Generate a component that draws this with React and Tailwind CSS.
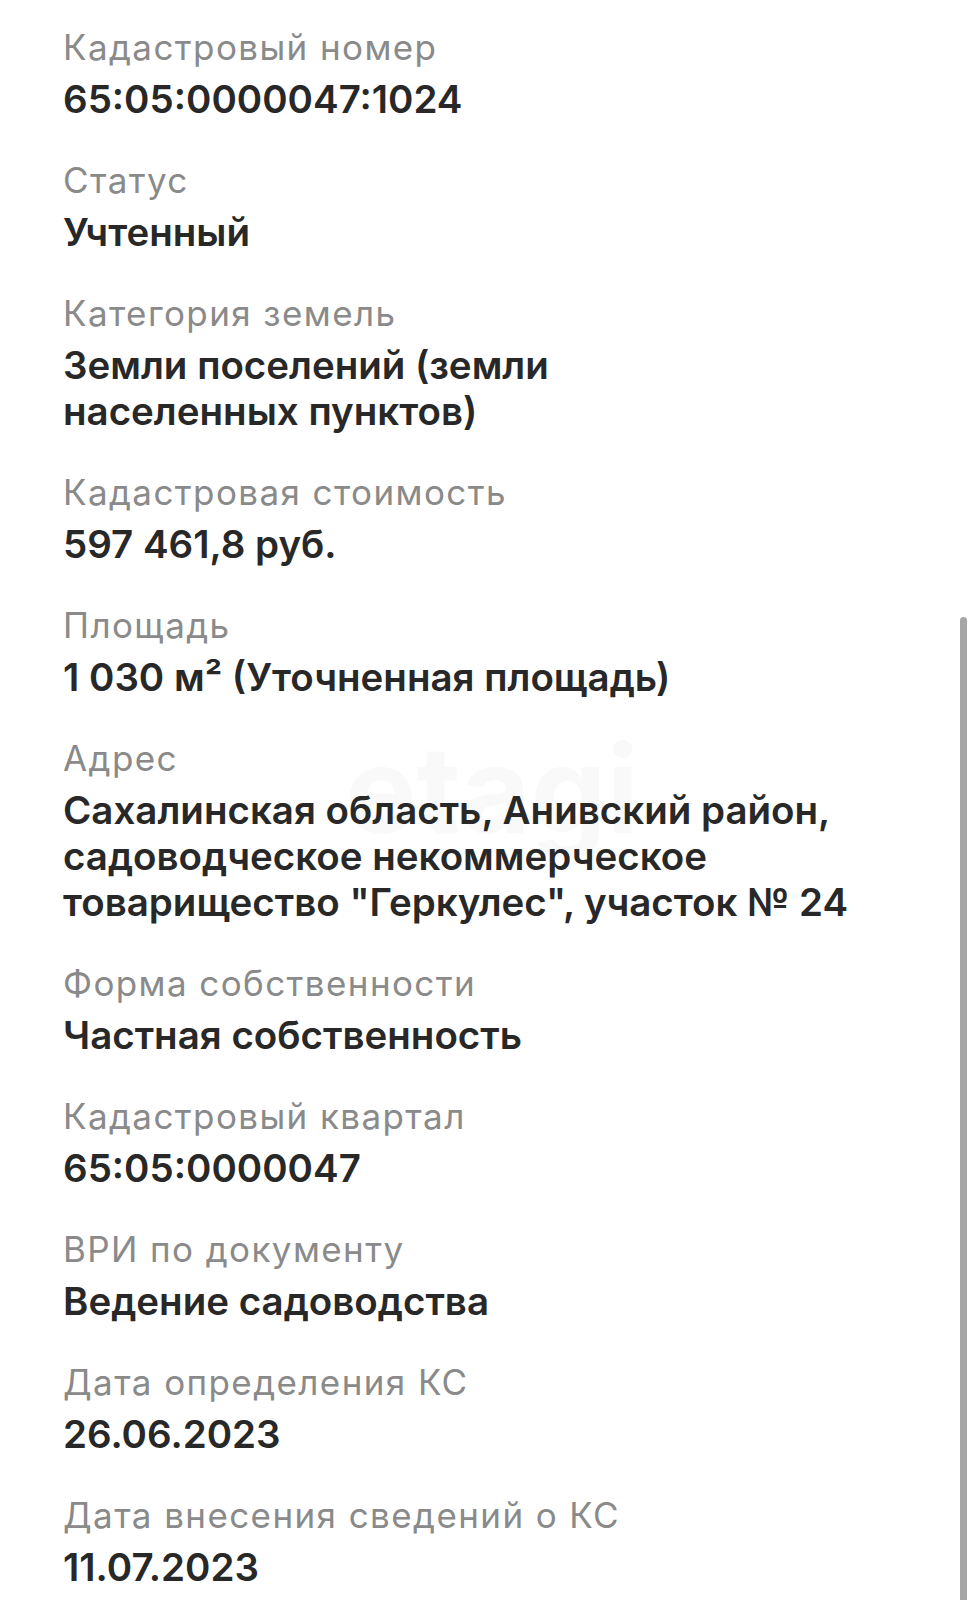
const rows = [
  { label: 'Кадастровый номер', value: ['65:05:0000047:1024'] },
  { label: 'Статус', value: ['Учтенный'] },
  { label: 'Категория земель', value: ['Земли поселений (земли', 'населенных пунктов)'] },
  { label: 'Кадастровая стоимость', value: ['597 461,8 руб.'] },
  { label: 'Площадь', value: ['1 030 м² (Уточненная площадь)'] },
  { label: 'Адрес', value: ['Сахалинская область, Анивский район,', 'садоводческое некоммерческое', 'товарищество "Геркулес", участок № 24'] },
  { label: 'Форма собственности', value: ['Частная собственность'] },
  { label: 'Кадастровый квартал', value: ['65:05:0000047'] },
  { label: 'ВРИ по документу', value: ['Ведение садоводства'] },
  { label: 'Дата определения КС', value: ['26.06.2023'] },
  { label: 'Дата внесения сведений о КС', value: ['11.07.2023'] },
];

export default function App() {
  return (
    <div className="relative h-[1600px] w-full overflow-hidden bg-white font-['Inter','Noto_Sans',sans-serif]">
      {/* faint watermark behind the address */}
      <div className="pointer-events-none absolute left-[345px] top-[700px] select-none text-[120px] font-bold text-[#f9f9f9]">
        etagi
      </div>

      <div className="relative flex flex-col gap-[34px] pl-[63px] pt-[23px]">
        {rows.map((r) => (
          <div key={r.label} className="flex flex-col">
            <div className="whitespace-nowrap text-[35px] leading-[48px] font-normal tracking-[1.4px] text-[#8a8a8a]">{r.label}</div>
            <div className="mt-[5px] whitespace-nowrap text-[38.5px] leading-[46px] font-semibold text-[#282828]">
              {r.value.map((line) => (
                <div key={line}>{line}</div>
              ))}
            </div>
          </div>
        ))}
      </div>

      <div className="absolute right-[8px] top-[617px] h-[1000px] w-[7px] rounded-full bg-[#a6a6a6]" />
    </div>
  );
}
